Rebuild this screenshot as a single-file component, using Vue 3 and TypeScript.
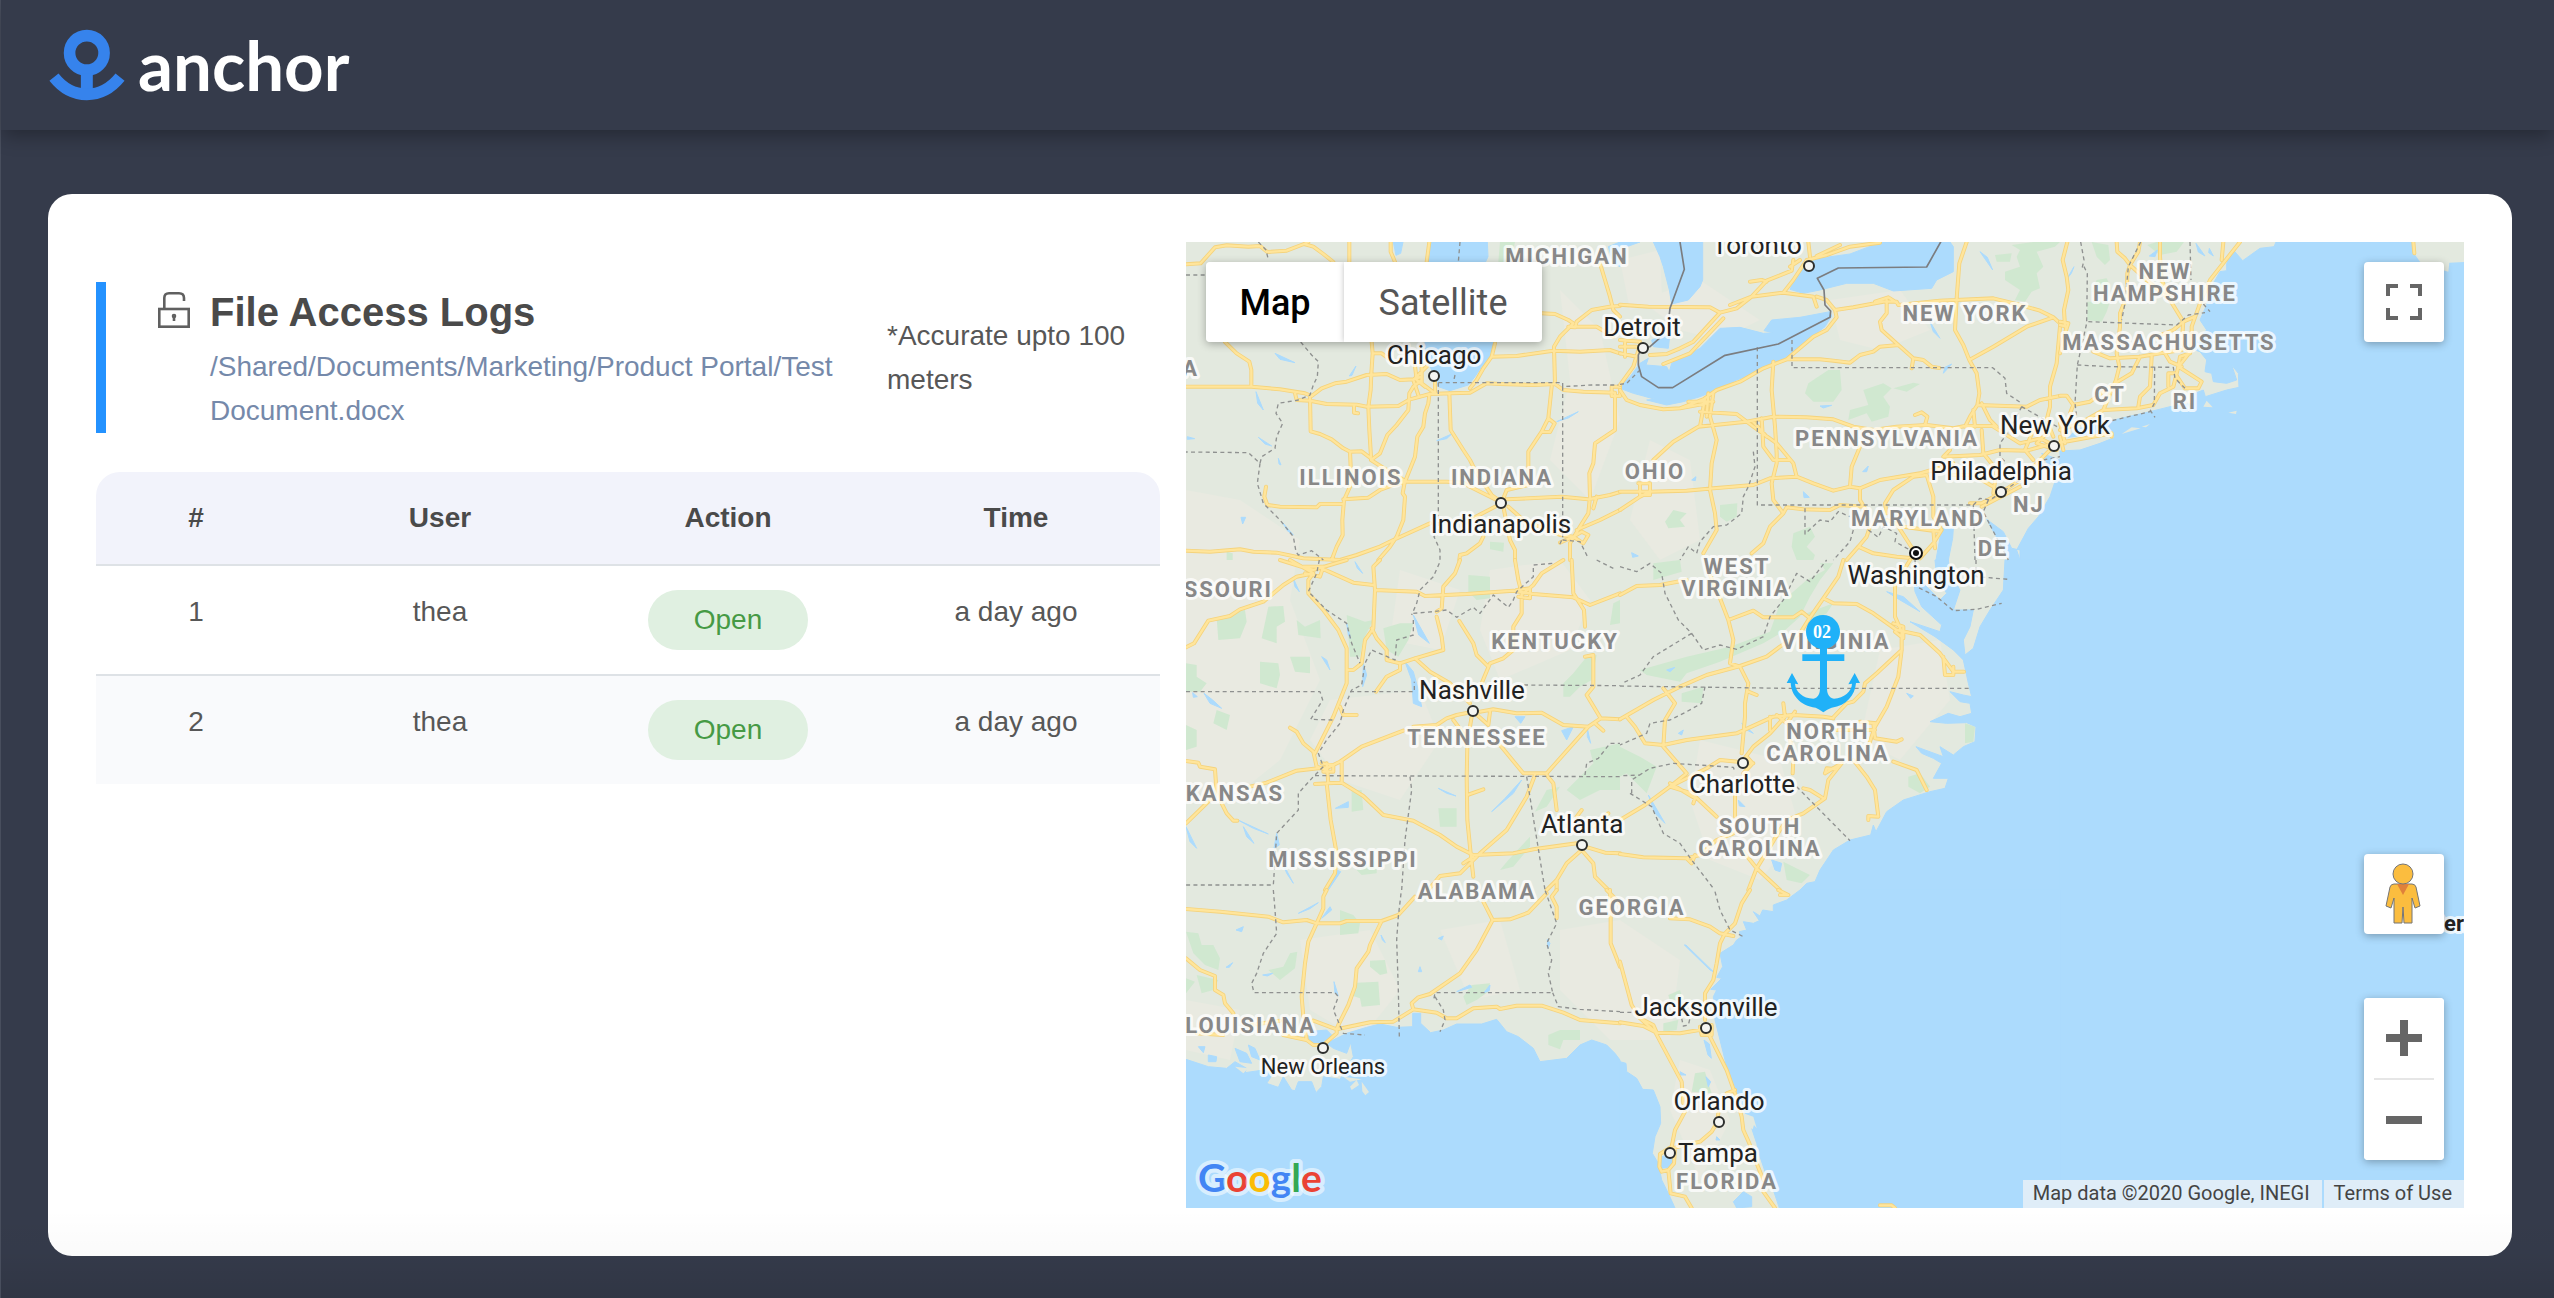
<script setup lang="ts">
import { ref } from 'vue'

interface LogEntry { id: number; user: string; action: string; time: string }
interface Tile { x: number; y: number; water: string; land?: string; parks: string; roads: string; borders: string; frontier?: string }
interface Label { text: string; x: number; y: number; anchor?: 'start' | 'middle' | 'end'; small?: boolean }
interface Dot { x: number; y: number }

const logs: LogEntry[] = [
  { id: 1, user: 'thea', action: 'Open', time: 'a day ago' },
  { id: 2, user: 'thea', action: 'Open', time: 'a day ago' },
]

const mapType = ref<'map' | 'satellite'>('map')

// Vector tiles: each is drawn at three units to the map pixel.
const tiles: Tile[] = [
  {
    x: 1180, y: 230,
    water: 'M750,36 922,36 924,80 910,110 950,336 935,385 905,410 885,440 865,465 810,482 775,470 760,430 735,380 735,336 745,100Z M640,36 669,36 662,70 648,76Z M1285,50 1320,36 1320,110 1300,100Z M285,370 345,398 300,388Z M228,485 250,540 233,520Z M235,622 275,648 255,642Z M770,632 815,612 800,626Z M1130,575 1195,545 1165,564Z M295,685 303,705 297,702Z M508,438 528,408 516,436Z M183,862 197,862 188,882Z M308,878 340,915 322,902Z M22,620 44,626 22,628Z',
    parks: 'M930,935 972,938 970,965 930,958Z M140,965 158,970 158,990 140,990Z M960,36 1005,36 1000,60 985,100 955,95Z',
    roads: 'M18,103 62,100 105,52 140,46 205,50 240,48 262,66 320,62 372,42 400,50 430,72 460,96 M508,36 508,96 M632,36 632,65 645,96 M748,36 740,96 M372,42 385,36 M135,336 170,370 208,395 214,420 214,470 M18,470 214,470 300,478 375,490 395,498 425,475 465,460 500,455 560,435 620,432 660,450 700,448 725,440 M345,490 350,510 390,512 440,522 530,524 560,530 655,528 690,508 750,492 810,490 870,488 920,460 960,462 1060,465 1125,462 1150,480 1210,485 1305,488 M522,528 522,548 534,550 M575,336 578,370 574,430 572,480 565,530 568,600 573,680 M573,685 545,664 510,665 490,655 455,628 420,612 392,604 390,498 M578,370 605,370 625,385 M510,665 512,710 510,770 492,810 487,870 488,915 470,950 455,990 M573,690 600,670 622,615 650,585 685,540 688,490 700,470 725,450 M490,808 565,803 600,780 640,765 675,755 800,755 M258,770 253,800 262,825 300,830 410,832 420,822 485,822 M573,690 620,720 675,752 668,790 675,800 670,870 650,920 630,950 595,990 M748,495 745,520 735,550 730,590 712,620 705,680 675,755 M808,490 812,600 850,660 870,690 890,730 935,795 958,812 M800,755 850,758 870,770 930,800 960,815 M18,962 90,965 180,958 220,965 290,968 370,985 480,990 530,975 600,950 640,930 750,880 M965,818 980,780 1045,765 1045,665 1085,605 1110,606 1124,580 1105,565 1085,605 M1105,565 1115,470 M980,808 1145,800 1225,808 1290,795 1320,786 M985,830 1030,870 1140,915 1180,920 M970,830 990,930 1005,960 1005,990 M945,830 850,880 M910,920 900,940 860,970 840,975 838,990 M1305,488 1305,600 1245,640 1240,700 1228,730 1230,800 1225,850 1200,890 1170,940 1170,990 M1180,920 1205,905 1225,915 1210,940 1180,920 1140,938 M1190,900 1260,870 1320,840 M1250,800 1240,835 M1086,250 1125,252 1165,270 1180,280 1140,320 1122,350 1125,462 M1165,290 1185,292 1190,275 1235,240 1290,230 1320,228 M1260,100 1275,150 1290,200 1300,240 1320,260 M1165,290 1250,290 1300,320 M935,380 1010,378 1120,362 1200,365 1290,360 1320,370 M945,340 935,380 910,415 890,450 870,475 M705,408 710,450 735,470 M725,400 725,460 765,490 M740,410 700,450 715,495 M765,450 765,490 M1295,470 1320,470 1320,498 1295,498Z',
    borders: 'M18,135 78,135 M235,36 258,60 264,85 M362,336 395,375 415,395 412,440 400,465 390,495 355,510 295,520 288,550 308,580 290,620 285,655 245,680 240,700 205,668 18,666 M240,700 232,760 250,820 300,870 340,920 348,965 355,975 395,962 430,990 M840,36 835,96 M825,435 820,458 M775,458 1148,458 1148,470 1235,465 1320,465 M775,458 775,905 762,920 780,960 780,990 M1148,470 1148,925 1138,945 M1148,930 1200,935 1225,985',
  },
  {
    x: 1620, y: 230,
    water: 'M0,36 60,36 20,50 0,44Z M100,36 248,36 248,150 240,170 205,210 155,222 148,180 130,110 120,80Z M0,470 30,440 60,400 85,385 78,405 140,410 148,425 155,400 240,355 300,295 360,292 430,310 460,308 432,302 455,270 540,262 630,245 635,258 615,290 570,325 500,380 430,420 350,450 290,480 240,500 190,515 140,525 80,510 105,508 70,498 40,490 0,475Z M95,330 150,310 145,355 100,350Z M785,36 990,36 1000,50 1000,125 950,150 935,175 820,183 760,160 680,160 600,180 550,190 510,178 535,125 575,88 690,72Z M1320,750 1305,755 1290,800 1255,860 1225,895 1190,960 1200,990 1320,990Z M1100,868 1150,905 1175,955 1200,960 1200,990 1170,990 1140,940Z M965,895 1000,895 998,925 985,990 948,990Z M930,275 960,325 940,305Z M1080,65 1102,82 1118,120Z M728,725 745,708 740,725Z M600,528 635,526 610,534Z M550,785 568,802 552,803Z M215,750 228,740 226,752Z M35,968 55,978 38,982Z M970,430 975,412 995,402Z M1265,670 1320,690 1320,720 1290,715Z',
    parks: 'M625,420 660,420 665,480 640,515 580,515 555,490 565,460Z M730,480 790,460 815,475 790,500 810,530 805,560 755,575 740,550 685,570 690,540 745,525Z M820,475 880,458 900,462 860,485Z M1125,75 1175,70 1170,95 1130,95Z M1175,45 1240,36 1320,36 1305,50 1250,65 1270,110 1250,130 1260,175 1235,185 1215,215 1185,210 1200,180 1155,150 1155,125 1200,110 1190,80 1200,60Z M160,840 200,850 180,870 195,890 145,895 135,875Z M300,825 352,820 350,860 320,875 300,860Z M520,910 570,890 585,920 560,950 585,975 580,990 530,990 515,950Z',
    roads: 'M0,224 85,230 270,232 300,248 M330,225 395,200 440,152 515,122 520,90 M390,155 425,150 440,155 M395,200 490,188 520,150 560,90 620,75 690,50 780,38 M565,36 570,80 M590,78 660,45 M540,90 510,110 M300,248 350,235 395,200 M0,330 60,335 M0,350 50,350 M15,330 15,380 M90,375 140,372 180,355 220,335 300,248 M130,402 210,370 310,265 M490,188 580,200 590,230 M0,370 50,380 M0,465 40,410 60,345 M0,480 20,510 60,525 130,538 180,535 250,508 290,480 360,455 430,415 500,388 580,320 620,300 650,262 645,240 700,232 790,215 830,215 835,225 960,212 1120,205 1200,225 1260,242 1300,262 1320,280 M590,200 620,210 645,240 M765,215 805,202 830,218 M800,210 800,250 780,275 785,300 835,345 880,385 875,415 M500,388 600,388 640,392 690,398 720,375 760,365 780,350 835,345 M880,385 910,390 935,410 958,414 M1040,36 1018,100 1010,205 1005,300 1030,345 1048,390 1070,430 1078,490 1072,525 1050,560 1035,590 M1300,262 1220,290 1120,350 1048,390 M1320,290 1310,400 1290,470 1290,530 1280,570 1300,620 M1072,525 1220,530 1260,510 1320,498 M1085,520 1110,570 1130,590 M460,395 455,480 465,590 470,670 470,700 455,760 460,810 490,850 450,890 430,940 395,970 M180,535 260,520 M205,515 280,515 M265,490 260,560 M240,545 350,552 400,590 470,640 520,700 530,740 580,760 640,782 690,770 720,775 780,750 900,730 990,710 1000,700 M235,590 380,575 460,560 560,562 640,568 700,590 760,600 830,590 920,585 1000,595 1035,588 1120,588 M235,590 160,635 100,690 M255,505 240,590 M280,490 270,560 290,630 275,700 270,780 285,850 290,900 250,970 M0,785 90,785 200,782 280,775 400,765 450,745 530,740 M0,840 60,800 90,785 M55,760 90,760 90,795 60,795 60,760 M425,565 430,650 460,690 510,690 M400,575 440,620 M720,650 695,710 690,770 M720,775 720,810 735,835 M490,850 500,832 550,838 630,840 660,825 730,830 M735,835 750,890 740,920 715,950 680,990 M715,950 760,970 830,980 880,985 M880,740 820,780 795,820 800,850 M880,740 920,735 940,800 940,860 965,900 940,940 900,985 M800,870 850,890 960,905 M835,890 880,960 M940,900 945,955 M885,555 905,547 922,560 915,585 M990,660 970,680 1080,675 1140,660 1220,662 1300,640 M1085,600 1090,670 1130,720 1120,790 M1050,820 1085,820 1140,790 1200,750 1260,690 1300,650 M1085,830 1200,770 M1000,700 950,715 900,730 M1000,735 1060,735 1120,770 M1240,600 1215,660 1240,690 M1200,640 1260,625 1310,650 M1290,600 1250,640 1310,660 M1060,540 1065,590 M1120,590 1200,640',
    borders: 'M0,463 20,460 60,420 M412,352 412,825 1060,825 M516,330 516,413 1118,413 1155,445 1160,490 1205,520 M1205,530 1320,595 M1205,530 1170,600 1140,640 1140,680 1160,700 M555,835 555,912 600,870 630,875 655,845 690,860 M745,900 775,922 790,890 830,910 825,935 870,960 M700,900 690,935 640,990 M400,665 405,710 385,770 370,800 365,850 320,885 280,890 240,935 230,970 205,950 180,990 M1060,825 1065,990 M1060,825 1080,805 1110,810 1200,750 M1110,885 1165,990 M1105,810 1090,845 1110,885 M1270,690 1320,680',
    frontier: 'M180,36 193,118 150,235 148,252 M118,325 90,350 65,355 55,375 55,405 65,440 115,473 158,473 315,376 475,342 630,262 632,243 615,225 612,180 592,145 655,114 920,111 962,36',
  },
  {
    x: 2060, y: 230,
    water: 'M648,36 1212,36 1212,990 0,990 0,663 60,660 120,640 165,622 150,603 25,622 50,598 140,575 270,545 330,530 400,520 405,490 430,480 436,500 500,480 537,472 535,430 515,405 530,450 500,460 460,455 455,430 435,425 440,390 420,365 405,360 412,330 440,300 420,270 440,225 460,160 480,125 500,122 500,100 520,60 548,92 600,55 642,50Z M408,40 435,78 415,66Z M22,145 42,110 34,130Z M448,55 460,78 446,68Z M268,78 292,60 285,80Z',
    land: 'M1055,36 1212,36 1212,96 1168,98 1165,125 1140,118 1080,95 1062,70Z M185,612 215,592 242,595Z M245,590 270,582 258,592Z M430,530 440,512 458,532Z M505,548 530,542 528,552Z',
    parks: 'M95,36 145,45 150,90 135,105 110,80Z M262,45 290,36 372,36 350,65 300,75Z M110,150 140,145 150,165 130,185 95,185Z M82,215 150,215 140,245 125,275 82,270Z',
    roads: 'M22,36 8,90 20,140 25,180 12,240 15,290 M0,285 20,290 10,330 0,370 M0,275 25,280 15,310 M170,36 172,65 195,85 210,105 M240,36 235,65 210,105 202,130 200,200 180,250 180,290 170,370 178,410 168,450 130,540 M300,36 300,80 305,150 330,210 370,275 M210,105 265,155 320,200 M540,36 505,80 450,150 420,220 395,290 395,360 355,410 340,470 300,490 280,525 230,535 130,540 60,580 0,600 M490,36 485,90 M405,260 370,275 340,300 290,320 M370,275 365,340 390,370 360,380 355,410 425,455 415,475 375,475 345,430 325,430 325,470 M100,365 150,385 240,380 300,370 365,360 M240,380 215,430 165,460 90,515 40,525 20,497 0,497 M275,380 270,470 240,500 235,530 M315,370 330,395 365,410 M40,525 30,550 M0,638 155,610 155,620 M0,620 10,660 M1060,36 1063,70 M0,580 15,640',
    borders: 'M62,36 72,90 65,120 M72,110 82,130 80,280 52,405 45,520 50,560 M242,36 205,110 195,220 185,270 M390,36 393,150 M85,275 350,285 385,255 435,248 M430,222 450,245 M52,405 150,410 340,412 345,445 375,475 M284,410 283,520 270,545 155,572 M270,540 285,562',
  },
  {
    x: 1180, y: 560,
    water: 'M675,305 700,335 715,390 725,440 700,430 695,360Z M550,310 560,345 548,380Z M500,190 512,235 505,225Z M385,105 445,155 420,135Z M1025,660 1000,700 935,755 975,715Z M1145,512 1180,500 1160,540Z M1222,505 1232,550 1222,530Z M1005,470 1035,470 1022,490Z M72,400 98,420 125,445 90,430Z M466,745 505,725 505,742Z M775,685 828,708 800,700Z M290,820 298,855 282,865Z M470,930 482,935 445,990 450,970Z M340,55 358,95 345,80Z M525,5 548,40 532,25Z M700,165 748,250 716,225Z M170,778 265,822 220,805Z M190,800 222,850 200,830Z M18,800 50,865 30,845Z M308,908 340,970 320,940Z M450,330 425,290 440,300Z M38,398 52,410 40,412Z',
    parks: 'M110,175 165,165 165,155 195,150 200,185 180,235 115,240Z M265,140 310,138 315,185 290,200 290,250 245,235Z M350,180 375,200 420,180 422,235 355,225Z M240,305 295,310 300,345 290,385 240,370Z M330,290 390,290 390,340 345,335Z M18,310 50,315 50,350 80,370 60,395 18,395Z M18,495 50,510 50,560 18,570Z M500,165 555,185 580,180 550,240 540,290 510,290Z M610,205 660,190 700,190 685,240 655,290 620,270Z M865,45 930,50 930,115 890,120 865,95Z M1220,290 1250,285 1235,360 1200,380 1170,410 1150,410 1150,370 1180,340Z M1230,570 1320,550 1320,690 1260,690 1200,720 1160,690 1190,660 1240,610Z M1100,690 1140,680 1100,740 1065,755Z M515,690 545,690 550,750 515,755Z M775,745 830,745 830,800 780,800Z M985,900 1050,830 1050,860 1000,920 960,930Z M110,450 150,465 140,510 100,490Z M1300,130 1320,120 1320,190 1290,195Z M530,930 590,900 590,940 545,945Z',
    roads: 'M18,262 42,250 85,182 150,168 180,148 250,125 310,75 350,50 400,40 M300,0 370,22 400,30 500,0 M330,0 400,40 M400,40 385,60 385,100 430,150 475,210 500,265 500,370 480,420 460,470 405,580 M370,20 430,20 420,50 375,40 M425,25 520,68 580,75 M600,0 580,20 585,90 580,205 555,240 545,310 520,330 500,330 M585,90 710,95 735,108 860,102 1000,92 1060,102 1180,112 1230,135 1320,100 M575,205 590,235 620,270 620,300 660,310 705,295 790,270 785,230 770,170 M660,310 660,330 620,350 588,395 M705,295 750,335 810,370 870,430 M840,0 825,40 790,80 785,145 770,155 M1005,0 1015,60 1025,100 1025,160 1000,200 1000,270 970,295 930,310 905,370 M1010,90 1050,85 1050,115 1015,110 M838,183 880,250 890,285 925,320 M1150,0 1085,40 1060,75 1030,100 M1175,0 1180,100 1212,150 1215,200 M1215,290 1240,285 1240,380 1220,405 1262,475 1320,478 M480,440 490,465 530,465 M330,503 350,515 370,550 400,575 410,620 440,630 M18,603 55,608 60,620 105,628 110,700 140,760 160,782 172,782 M18,790 90,720 M210,680 260,668 350,632 440,622 M425,610 460,615 460,635 430,635 M440,610 445,670 405,672 M440,625 480,605 545,560 670,512 M485,605 485,665 M440,670 485,668 550,708 610,765 700,782 780,825 830,860 880,885 M440,670 452,780 470,880 465,940 435,990 M700,500 770,495 800,475 830,465 880,455 M820,480 850,520 862,560 860,650 862,780 872,880 880,950 M880,455 925,495 930,455 M875,470 870,500 M900,455 940,448 1010,460 1085,458 1150,495 1225,500 1262,475 M960,555 1030,640 1100,640 1225,500 M1245,490 1270,512 M862,705 910,688 M1065,645 1040,710 980,810 900,880 840,940 780,948 745,990 M880,885 1000,880 1060,868 1190,850 M850,910 880,890 M1100,645 1120,670 1130,750 M1205,870 1160,910 1130,960 1100,990 M1205,870 1240,910 1245,950 1285,990 M1215,860 1275,878 1320,880 M1205,750 1190,770 M1130,960 1130,990 M1285,760 1240,800',
    borders: 'M418,0 410,40 385,95 440,150 500,190 515,250 540,310 M778,10 760,50 720,90 710,130 695,165 M700,160 760,155 800,150 830,172 880,142 900,160 940,105 985,142 1000,120 1010,95 1060,50 1060,15 1120,10 M1250,0 1300,25 M700,180 700,225 650,240 645,300 575,270 555,310 545,375 515,390 490,450 480,490 440,540 415,580 430,620 400,650 355,700 355,750 290,820 285,900 280,975 18,975 M18,395 420,395 428,420 392,478 460,480 M510,395 703,395 703,365 M1032,375 1320,377 M405,647 1320,650 M1215,645 1220,610 1255,595 1290,550 1320,550 M690,650 695,690 675,840 665,990 M1040,650 1095,990',
  },
  {
    x: 1620, y: 560,
    water: 'M1155,0 1320,0 1320,990 540,990 560,970 585,965 600,930 640,870 690,840 752,825 760,795 768,815 800,755 850,720 930,695 975,685 985,655 940,655 965,610 940,595 905,580 888,560 970,590 960,560 1000,585 1030,560 1065,545 1068,500 1040,488 980,490 930,485 985,460 1020,470 1055,460 1050,430 1020,425 990,395 1030,405 1055,410 1045,370 1030,300 1000,270 945,230 870,185 960,215 965,195 905,140 885,95 880,50 900,60 960,120 980,100 950,50 945,0 985,0 990,40 1020,90 1000,150 1060,150 1050,200 1030,240 1035,285 1060,265 1080,200 1110,150 1150,90Z M800,95 850,110 900,155 840,120Z M455,900 485,910 480,935 465,930Z M85,705 135,790 105,760Z M365,490 400,520 380,510Z M355,720 375,740 358,738Z M140,330 165,322 150,335Z M860,400 880,408 872,415Z M175,520 190,510 185,525Z',
    parks: 'M60,330 200,290 330,260 450,215 480,130 560,60 615,30 600,10 640,10 600,60 570,110 540,170 490,215 430,250 300,305 200,340 180,365 80,345Z M100,10 180,0 185,35 100,60Z M185,400 250,380 245,430 185,425Z M0,560 60,590 110,620 80,700 20,640 0,650Z M865,650 900,640 930,680 900,700 865,680Z M1035,490 1065,500 1060,545 1035,550Z M490,905 570,945 545,970 500,960Z M560,160 640,130 620,160 580,180Z',
    roads: 'M0,105 50,78 120,75 200,60 M270,45 300,115 325,180 340,240 330,310 360,320 385,370 375,430 375,470 365,580 M325,180 400,152 430,172 520,172 545,155 570,175 M670,0 655,50 610,115 565,180 540,220 480,260 440,290 360,318 260,345 180,380 100,420 0,478 M610,115 640,130 710,132 760,160 830,210 900,225 960,280 1000,335 1032,335 M970,290 975,345 1000,345 1000,320 M870,0 825,75 825,170 845,215 845,270 835,350 800,440 765,500 M820,190 850,200 850,235 825,215 M845,270 770,340 735,370 730,395 700,425 680,430 640,472 M130,385 165,430 135,480 130,560 200,640 150,680 215,700 290,770 M20,470 45,500 75,550 130,555 200,540 350,520 460,470 520,465 610,470 640,475 M450,470 450,510 M490,430 495,470 450,520 400,560 370,600 M470,465 500,490 525,455 M385,395 410,405 M400,610 300,600 260,625 150,680 75,735 0,780 M150,670 225,715 220,730 M345,700 345,770 M380,590 398,610 370,640 M510,540 520,600 518,640 M615,640 640,625 665,610 625,660 615,715 550,760 500,780 480,810 450,860 M615,640 620,625 650,628 M550,685 570,690 610,715 M760,490 765,535 830,545 845,538 M765,500 745,560 M650,510 765,510 M720,485 770,490 M700,600 740,650 765,690 775,770 745,768 745,780 M820,605 890,630 920,690 M370,875 410,925 480,990 M410,925 385,990 M450,860 410,925 M0,882 70,892 200,895 240,885 290,840 340,820 M200,895 215,910 225,885',
    borders: 'M0,378 500,385 1055,385 M0,20 50,35 90,10 125,40 135,100 175,180 215,220 250,270 300,255 350,268 430,230 450,170 490,120 530,40 570,65 620,0 M215,220 100,290 60,345 10,368 M255,380 245,430 200,455 150,480 90,490 80,520 0,555 M885,0 890,80 950,110 1000,152 1070,148 1145,130 M1068,0 1068,50 1165,58 M10,647 60,645 M35,700 35,660 90,625 160,610 340,622 345,635 M30,700 95,740 130,820 180,850 215,900 280,985 M530,680 690,842',
  },
  {
    x: 2060, y: 560,
    water: 'M0,0 1212,0 1212,1944 0,1944Z',
    parks: '',
    roads: '',
    borders: '',
  },
  {
    x: 1180, y: 890,
    water: 'M18,508 85,530 140,535 165,515 200,535 195,548 250,540 280,550 260,580 295,592 310,560 335,600 345,602 355,575 395,575 408,608 425,590 430,560 480,568 520,500 512,458 500,490 460,475 440,460 500,430 560,412 600,402 650,412 698,410 698,370 722,370 722,400 752,428 790,420 830,402 905,402 950,388 980,425 1015,440 1060,475 1080,515 1160,505 1200,465 1235,450 1280,465 1305,490 1320,510 1320,954 18,954Z M385,425 440,420 460,440 440,460 400,465 385,450Z M55,470 75,470 70,488Z M85,495 110,500 108,515 85,515Z M165,475 200,490 215,520 180,515Z M205,465 225,475 240,510 215,500Z M168,120 190,110 185,125Z M138,232 158,218 148,232Z M355,70 415,38 390,56Z M425,85 450,50 455,60Z M720,230 725,245 715,245Z M775,145 790,138 785,150Z M603,135 616,158 607,150Z M830,305 870,285 875,292Z M912,308 930,285 928,302Z M1102,148 1110,160 1104,175Z M462,275 475,318 465,310Z M248,255 278,250 262,258Z',
    land: 'M510,590 530,570 537,585 515,600Z M545,575 567,606 556,616 547,604Z M165,530 205,535 190,550Z M490,560 545,568 510,575Z',
    parks: 'M18,125 55,130 65,165 100,165 120,205 115,240 75,225 40,190Z M50,255 115,270 100,300 65,310Z M18,265 45,275 18,310Z M480,60 520,75 540,100 535,130 480,135Z M570,212 615,210 622,250 600,255 570,230Z M530,278 595,275 600,345 545,350 540,325 510,315Z M265,240 310,230 330,190 352,185 345,235 300,270Z M875,285 930,280 925,305 890,330 860,345 850,320Z M1105,435 1140,420 1200,420 1200,450 1150,450 1140,478 1105,465Z',
    roads: 'M18,57 120,65 265,80 310,97 380,90 410,100 480,100 500,93 605,93 655,75 705,20 M440,0 430,20 430,55 410,100 385,155 375,220 365,320 370,380 M605,93 570,165 565,185 530,235 525,290 505,345 475,405 470,418 M18,205 60,240 105,258 105,300 130,315 135,340 160,370 M50,430 130,435 M215,405 300,392 M400,392 470,418 570,397 640,395 700,358 695,340 715,322 750,312 840,250 890,180 938,90 910,35 M310,435 380,450 400,465 430,465 470,430 470,418 M378,430 380,450 M938,90 990,88 1045,68 1100,10 M700,358 770,368 800,385 830,385 880,355 950,350 960,357 1010,347 1085,347 1150,368 1200,390 1320,400 M1130,0 1115,20 1130,50 1130,85 M1290,0 1292,80 1292,160 1320,230 M1280,0 1320,40',
    borders: 'M280,0 285,60 290,130 250,190 230,250 215,280 222,308 465,308 475,320 460,360 490,430 555,435 M663,10 655,80 650,150 655,300 658,440 M762,325 765,308 1118,308 1105,250 1115,210 1100,160 1130,100 1095,0 M765,320 790,360 795,390 780,425 M1118,308 1135,350 1200,358 1320,365',
  },
  {
    x: 1620, y: 890,
    water: 'M540,0 1320,0 1320,954 478,954 460,900 440,860 420,800 410,760 390,700 370,655 345,590 320,530 300,450 285,390 280,320 290,300 272,298 305,265 290,262 308,230 300,190 340,165 350,150 362,142 358,125 380,120 370,95 400,100 418,92 400,65 420,78 428,60 460,65 460,45 500,30Z M0,515 18,520 20,545 50,565 68,598 100,600 120,650 122,700 105,740 97,790 115,820 125,870 145,910 165,954 0,954Z M340,935 370,905 395,920 395,950 350,954Z M122,800 160,795 155,830 125,835Z M252,450 268,462 274,505 264,495Z M193,165 198,165 280,245 270,240Z M180,545 198,555 182,555Z M258,560 272,575 265,590Z M290,740 300,750 288,750Z',
    land: 'M370,670 400,680 410,715 402,705 398,718 385,710Z',
    parks: 'M145,315 180,300 190,330 150,335Z M130,400 175,390 170,420 130,425Z M225,550 255,545 265,580 275,610 215,605Z',
    roads: 'M390,0 365,40 345,100 315,130 300,160 290,220 280,270 255,310 255,390 M150,85 210,88 270,110 300,130 340,138 M0,215 35,345 60,385 105,425 145,500 185,575 190,640 M195,665 165,720 155,770 120,792 118,830 125,845 145,840 162,820 165,775 M0,397 70,408 110,428 180,430 250,418 M240,410 245,435 275,435 275,405 M265,430 320,540 345,610 365,680 370,720 388,760 410,820 430,870 M430,905 465,954 M155,775 240,755 275,725 290,700 295,670 M145,840 152,910 195,920 215,954 M475,0 505,15 480,15 M780,946 815,946 825,954 M320,610 345,600 M60,385 100,405 110,428',
    borders: 'M285,5 300,60 330,120 370,140 M0,367 50,367 M185,385 190,408 205,405 210,385',
  },
]

// Paler ground between the wooded areas, in map pixels.
const ground = [
  'M1186,490 1240,500 1300,540 1290,600 1320,680 1280,760 1230,800 1186,790Z',
  'M1330,700 1420,690 1440,740 1400,800 1340,780 1310,740Z',
  'M1490,570 1560,560 1590,600 1570,650 1500,680 1480,630Z',
  'M1560,290 1600,330 1620,420 1590,500 1550,460 1570,380Z',
  'M1640,300 1700,280 1760,320 1720,340 1680,330Z',
  'M1650,440 1690,460 1700,540 1660,560 1630,520Z',
  'M1700,740 1780,760 1800,830 1760,880 1710,860 1690,800Z',
  'M1880,650 1940,640 1950,700 1900,760 1860,740Z',
  'M1560,930 1620,920 1680,960 1670,1040 1610,1040 1560,990Z',
  'M1300,940 1370,930 1400,990 1360,1040 1310,1010Z',
  'M1440,930 1500,920 1520,990 1470,1000Z',
  'M1186,1000 1240,1010 1230,1060 1186,1050Z',
  'M1830,300 1900,290 1930,330 1880,350 1840,340Z',
  'M1680,1060 1710,1070 1730,1120 1700,1180 1670,1110Z',
  'M1620,260 1660,250 1662,300 1630,310Z',
  'M1400,570 1460,590 1440,650 1390,640Z',
]

const states: Label[] = [
  { text: 'MICHIGAN', x: 1567, y: 264 },
  { text: 'IOWA', x: 1199, y: 376, anchor: 'end' },
  { text: 'ILLINOIS', x: 1351, y: 485 },
  { text: 'INDIANA', x: 1502, y: 485 },
  { text: 'OHIO', x: 1655, y: 479 },
  { text: 'PENNSYLVANIA', x: 1887, y: 446 },
  { text: 'NEW YORK', x: 1965, y: 321 },
  { text: 'MARYLAND', x: 1918, y: 526 },
  { text: 'NJ', x: 2029, y: 512 },
  { text: 'DE', x: 1993, y: 556 },
  { text: 'NEW', x: 2165, y: 279 },
  { text: 'HAMPSHIRE', x: 2165, y: 301 },
  { text: 'MASSACHUSETTS', x: 2169, y: 350 },
  { text: 'CT', x: 2110, y: 402 },
  { text: 'RI', x: 2185, y: 409 },
  { text: 'MISSOURI', x: 1273, y: 597, anchor: 'end' },
  { text: 'KENTUCKY', x: 1555, y: 649 },
  { text: 'TENNESSEE', x: 1477, y: 745 },
  { text: 'ARKANSAS', x: 1284, y: 801, anchor: 'end' },
  { text: 'MISSISSIPPI', x: 1343, y: 867 },
  { text: 'ALABAMA', x: 1477, y: 899 },
  { text: 'GEORGIA', x: 1632, y: 915 },
  { text: 'LOUISIANA', x: 1316, y: 1033, anchor: 'end' },
  { text: 'WEST', x: 1737, y: 574 },
  { text: 'VIRGINIA', x: 1736, y: 596 },
  { text: 'VIRGINIA', x: 1836, y: 649 },
  { text: 'NORTH', x: 1828, y: 739 },
  { text: 'CAROLINA', x: 1828, y: 761 },
  { text: 'SOUTH', x: 1760, y: 834 },
  { text: 'CAROLINA', x: 1760, y: 856 },
  { text: 'FLORIDA', x: 1727, y: 1189 },
]

const cities: Label[] = [
  { text: 'Chicago', x: 1434, y: 364 },
  { text: 'Detroit', x: 1642, y: 336 },
  { text: 'Toronto', x: 1757, y: 254 },
  { text: 'Indianapolis', x: 1501, y: 533 },
  { text: 'New York', x: 2055, y: 434 },
  { text: 'Philadelphia', x: 2001, y: 480 },
  { text: 'Washington', x: 1916, y: 584 },
  { text: 'Nashville', x: 1472, y: 699 },
  { text: 'Charlotte', x: 1742, y: 793 },
  { text: 'Atlanta', x: 1582, y: 833 },
  { text: 'New Orleans', x: 1323, y: 1074, small: true },
  { text: 'Jacksonville', x: 1706, y: 1016 },
  { text: 'Orlando', x: 1719, y: 1110 },
  { text: 'Tampa', x: 1718, y: 1162 },
]

const dots: Dot[] = [
  { x: 1434, y: 376 }, { x: 1643, y: 348 }, { x: 1809, y: 266 }, { x: 1501, y: 503 },
  { x: 2054, y: 446 }, { x: 2001, y: 492 }, { x: 1473, y: 711 }, { x: 1743, y: 763 },
  { x: 1582, y: 845 }, { x: 1323, y: 1048 }, { x: 1706, y: 1028 }, { x: 1719, y: 1122 },
  { x: 1670, y: 1153 },
]

const place = (t: Tile): string => `translate(${t.x} ${t.y}) scale(0.33333)`
</script>

<template>
  <div class="page">
    <header class="topbar">
      <a class="brand" href="#" aria-label="anchor home">
        <svg class="brand-mark" viewBox="147 89 229 215" fill="none" stroke="#3683ec" aria-hidden="true">
          <circle cx="261" cy="160" r="52" stroke-width="35" />
          <path d="M261 222V280" stroke-width="36" />
          <path d="M162 233Q203 285 261 285T361 233" stroke-width="35" />
        </svg>
        <span class="brand-name">anchor</span>
      </a>
    </header>

    <main class="content">
      <section class="card">
        <div class="logs">
          <div class="logs-head">
            <svg class="lock" viewBox="0 0 32 36" fill="none" stroke="#606060" stroke-width="2.6" aria-hidden="true">
              <rect x="1.3" y="17" width="29.4" height="17.7" />
              <path d="M6.3 17V6Q6.3 1.3 11 1.3H21Q26 1.3 26 6V9" />
              <circle cx="16" cy="24" r="1" />
              <path d="M16 24V29" />
            </svg>
            <div class="logs-title">
              <h1>File Access Logs</h1>
              <p class="path">/Shared/Documents/Marketing/Product Portal/Test Document.docx</p>
            </div>
            <p class="note">*Accurate upto 100 meters</p>
          </div>

          <table class="log-table">
            <thead>
              <tr>
                <th class="col-id" scope="col">#</th>
                <th scope="col">User</th>
                <th scope="col">Action</th>
                <th scope="col">Time</th>
              </tr>
            </thead>
            <tbody>
              <tr v-for="log in logs" :key="log.id">
                <td>{{ log.id }}</td>
                <td>{{ log.user }}</td>
                <td><span class="pill">{{ log.action }}</span></td>
                <td>{{ log.time }}</td>
              </tr>
            </tbody>
          </table>
        </div>

        <div class="map">
          <svg class="map-canvas" viewBox="1186 242 1278 966" preserveAspectRatio="xMidYMid slice" role="img" aria-label="Map of the eastern United States">
            <rect x="1186" y="242" width="1278" height="966" fill="#e3e9df" />
            <path v-for="(d, i) in ground" :key="'g' + i" :d="d" fill="#e9eae1" />
            <g v-for="(t, i) in tiles" :key="'a' + i" :transform="place(t)">
              <path :d="t.parks" fill="#d0e8d0" />
              <path :d="t.water" fill="#acdbfd" stroke="#acdbfd" stroke-width="3" />
            </g>
            <g v-for="(t, i) in tiles" :key="'b' + i" :transform="place(t)" class="lines">
              <path v-if="t.land" :d="t.land" fill="#e3e9df" />
              <path :d="t.roads" stroke="#f5d37c" stroke-width="12" />
              <path :d="t.roads" stroke="#ffe59b" stroke-width="7" />
              <path :d="t.borders" stroke="#8f9190" stroke-width="4" stroke-dasharray="12 10" stroke-linecap="butt" />
              <path v-if="t.frontier" :d="t.frontier" stroke="#7b7d80" stroke-width="5" />
            </g>

            <g class="labels">
              <text v-for="(s, i) in states" :key="'s' + i" class="state" :x="s.x" :y="s.y" :text-anchor="s.anchor ?? 'middle'">{{ s.text }}</text>
              <text v-for="c in cities" :key="c.text" class="city" :class="{ small: c.small }" :x="c.x" :y="c.y" text-anchor="middle">{{ c.text }}</text>
              <text class="island" x="2430" y="931">Bermuda</text>
            </g>
            <circle v-for="(p, i) in dots" :key="'d' + i" :cx="p.x" :cy="p.y" r="5" fill="#f4f5f2" stroke="#2c2e2d" stroke-width="2" />
            <circle cx="1916" cy="553" r="6" fill="#fff" stroke="#111" stroke-width="2" />
            <circle cx="1916" cy="553" r="3" fill="#111" />

            <g fill="#20b1f8">
              <circle cx="1823" cy="632" r="17" />
              <g transform="translate(1620 560) scale(0.33333)">
                <path d="M516,339 535,373 525,371C527,395 548,415 580,416C595,414 600,400 600,385L600,262 621,262 621,385C621,400 626,414 642,416C672,414 695,395 696,371L685,373 704,339 720,369 708,369C705,405 680,437 635,443C625,447 618,450 610,457C602,450 595,447 587,443C540,437 514,405 512,369L500,369Z" />
                <path d="M547,283H673V303H547Z" />
              </g>
            </g>
            <text class="marker-count" x="1822" y="638" text-anchor="middle">02</text>

            <text class="google" x="1198" y="1192"><tspan fill="#4285f4">G</tspan><tspan fill="#ea4335">o</tspan><tspan fill="#fbbc05">o</tspan><tspan fill="#4285f4">g</tspan><tspan fill="#34a853">l</tspan><tspan fill="#ea4335">e</tspan></text>
          </svg>

          <div class="map-types">
            <button type="button" class="type" :class="{ active: mapType === 'map' }" @click="mapType = 'map'">Map</button>
            <button type="button" class="type wide" :class="{ active: mapType === 'satellite' }" @click="mapType = 'satellite'">Satellite</button>
          </div>

          <button type="button" class="tool fullscreen" aria-label="Toggle fullscreen view">
            <svg viewBox="0 0 36 36" width="36" height="36" fill="none" stroke="#666" stroke-width="4" aria-hidden="true">
              <path d="M2 12V2H12M24 2H34V12M34 24V34H24M12 34H2V24" />
            </svg>
          </button>

          <div class="tools">
            <button type="button" class="tool" aria-label="Street View">
              <svg viewBox="0 0 40 64" width="40" height="64" stroke="#757575" aria-hidden="true">
                <path d="M10 22H28Q31 22 32 25L36 44 31 46 28 36V61H20L19 45 18 61H10V36L7 46 2 44 6 25Q7 22 10 22Z" fill="#fbbd3f" />
                <path d="M13 22H25L19 33Z" fill="#e0813a" stroke="none" />
                <circle cx="19" cy="12" r="10" fill="#fbbd3f" />
              </svg>
            </button>
            <div class="zoom">
              <button type="button" class="zoom-btn" aria-label="Zoom in">
                <svg viewBox="0 0 36 36" width="36" height="36" fill="#666" aria-hidden="true"><path d="M14 0H22V14H36V22H22V36H14V22H0V14H14Z" /></svg>
              </button>
              <span class="zoom-rule"></span>
              <button type="button" class="zoom-btn" aria-label="Zoom out">
                <svg viewBox="0 0 36 36" width="36" height="36" fill="#666" aria-hidden="true"><path d="M0 14H36V22H0Z" /></svg>
              </button>
            </div>
          </div>

          <div class="credits">
            <span>Map data ©2020 Google, INEGI</span>
            <a href="#">Terms of Use</a>
          </div>
        </div>
      </section>
    </main>
  </div>
</template>

<style>
body {
  margin: 0;
  background: #353b4b;
}
</style>

<style scoped>
.page {
  position: relative;
  box-sizing: border-box;
  min-height: 100vh;
  border-left: 1px solid #484e5d;
  background: #353b4b;
  font-family: "Liberation Sans", Arial, sans-serif;
  font-size: 28px;
  line-height: 44px;
  color: #575757;
}
.page::after {
  content: "";
  position: absolute;
  inset: auto 0 0 0;
  height: 88px;
  background: linear-gradient(transparent, rgba(0, 0, 0, 0.02) 50%, rgba(0, 0, 0, 0.09));
  pointer-events: none;
}
.topbar {
  display: flex;
  align-items: center;
  height: 130px;
  padding: 0 48px;
  box-shadow: 0 8px 18px -2px rgba(0, 0, 0, 0.3);
}
.brand {
  display: flex;
  align-items: center;
  gap: 13px;
  color: #fff;
  text-decoration: none;
}
.brand-mark {
  width: 76px;
  height: 72px;
}
.brand-name {
  font: 700 69px/80px Lato, sans-serif;
}
.content {
  padding: 64px 42px 42px 47px;
}
.card {
  display: grid;
  grid-template-columns: 532fr 639fr;
  gap: 26px;
  padding: 48px;
  border-radius: 24px;
  background: #fff;
}
.logs {
  min-width: 0;
  padding-top: 40px;
}
.logs-head {
  display: flex;
  align-items: flex-start;
  margin-bottom: 39px;
  padding-left: 52px;
  border-left: 10px solid #2492ff;
}
.lock {
  flex: none;
  width: 32px;
  height: 36px;
  margin: 10px 20px 0 0;
}
.logs-title {
  flex: 1;
  min-width: 0;
}
h1 {
  margin: 0 0 3px;
  font-size: 40px;
  line-height: 60px;
  color: #4a4a4a;
}
p {
  margin: 0;
}
.path {
  color: #7589aa;
}
.note {
  flex: 0 0 273px;
  align-self: center;
}
.log-table {
  width: 100%;
  table-layout: fixed;
  border-spacing: 0;
  text-align: center;
}
th {
  padding: 24px 0;
  background: #f2f3fb;
  border-bottom: 2px solid #dee2e6;
  color: #4a4a4a;
}
th:first-child {
  border-top-left-radius: 24px;
}
th:last-child {
  border-top-right-radius: 24px;
}
.col-id {
  width: 200px;
}
td {
  padding: 24px 0;
  vertical-align: top;
}
tbody tr:nth-child(even) td {
  border-top: 2px solid #dee2e6;
  background: #f9fafc;
}
.pill {
  display: block;
  width: 160px;
  margin: 0 auto;
  border-radius: 30px;
  background: #e0f0e1;
  color: #469a45;
  line-height: 60px;
}
.map {
  position: relative;
  height: calc(100vh - 332px);
  min-height: 640px;
  overflow: hidden;
  font-family: Roboto, sans-serif;
}
.map-canvas {
  display: block;
  width: 100%;
  height: 100%;
}
.lines {
  fill: none;
  stroke-linejoin: round;
  stroke-linecap: round;
}
.labels text {
  paint-order: stroke;
  stroke: rgba(255, 255, 255, 0.75);
  stroke-width: 6px;
  stroke-linejoin: round;
}
.state {
  font-size: 22px;
  font-weight: 700;
  letter-spacing: 2px;
  fill: #888;
}
.city {
  font-size: 26px;
  fill: #222;
}
.city.small {
  font-size: 22px;
}
.island {
  font-size: 22px;
  font-weight: 700;
  fill: #222;
}
.marker-count {
  font: 700 18px "Liberation Serif", serif;
  fill: #fff;
}
.google {
  font: 700 39px Lato, sans-serif;
  paint-order: stroke;
  stroke: rgba(255, 255, 255, 0.55);
  stroke-width: 8px;
  stroke-linejoin: round;
}
button {
  display: flex;
  align-items: center;
  justify-content: center;
  padding: 0;
  border: 0;
  background: #fff;
  cursor: pointer;
}
.map-types {
  position: absolute;
  top: 20px;
  left: 20px;
  display: flex;
  overflow: hidden;
  border-radius: 4px;
  box-shadow: 0 2px 8px rgba(0, 0, 0, 0.3);
}
.type {
  width: 138px;
  height: 80px;
  padding-top: 2px;
  font: 400 36px Roboto, sans-serif;
  color: #565656;
}
.type.wide {
  width: 198px;
  box-shadow: 0 0 6px rgba(0, 0, 0, 0.25);
}
.type.active {
  font-weight: 500;
  color: #000;
}
.tool {
  width: 80px;
  height: 80px;
  border-radius: 4px;
  box-shadow: 0 2px 8px rgba(0, 0, 0, 0.3);
}
.fullscreen {
  position: absolute;
  top: 20px;
  right: 20px;
}
.tools {
  position: absolute;
  right: 20px;
  bottom: 48px;
  display: flex;
  flex-direction: column;
  gap: 64px;
}
.zoom {
  display: flex;
  flex-direction: column;
  align-items: center;
  overflow: hidden;
  border-radius: 4px;
  background: #fff;
  box-shadow: 0 2px 8px rgba(0, 0, 0, 0.3);
}
.zoom-btn {
  width: 80px;
  height: 80px;
}
.zoom-rule {
  width: 60px;
  height: 2px;
  background: #e6e6e6;
}
.credits {
  position: absolute;
  right: 0;
  bottom: 0;
  display: flex;
  gap: 2px;
  font-size: 20px;
  line-height: 26px;
}
.credits > * {
  padding: 0 12px 2px 10px;
  background: rgba(245, 245, 245, 0.7);
  color: #444;
  text-decoration: none;
}
</style>
